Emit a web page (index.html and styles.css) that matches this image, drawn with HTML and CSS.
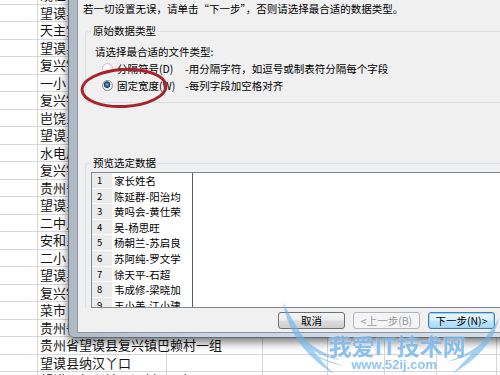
FILE: index.html
```html
<!DOCTYPE html>
<html lang="zh-CN">
<head>
    <meta charset="UTF-8">
    <title>文本分列向导</title>
    <link rel="stylesheet" href="styles.css">
</head>
<body>
    <div class="screen">
        <!-- spreadsheet behind the wizard -->
        <div class="sheet">
            <div class="row"><div class="cell"></div><div class="cell">现任职务</div><div class="cell"></div><div class="cell"></div><div class="cell"></div><div class="cell"></div><div class="cell"></div><div class="cell"></div></div>
            <div class="row"><div class="cell"></div><div class="cell">望谟县</div><div class="cell"></div><div class="cell"></div><div class="cell"></div><div class="cell"></div><div class="cell"></div><div class="cell"></div></div>
            <div class="row"><div class="cell"></div><div class="cell">天主堂</div><div class="cell"></div><div class="cell"></div><div class="cell"></div><div class="cell"></div><div class="cell"></div><div class="cell"></div></div>
            <div class="row"><div class="cell"></div><div class="cell">望谟县</div><div class="cell"></div><div class="cell"></div><div class="cell"></div><div class="cell"></div><div class="cell"></div><div class="cell"></div></div>
            <div class="row"><div class="cell"></div><div class="cell">复兴镇</div><div class="cell"></div><div class="cell"></div><div class="cell"></div><div class="cell"></div><div class="cell"></div><div class="cell"></div></div>
            <div class="row"><div class="cell"></div><div class="cell">一小</div><div class="cell"></div><div class="cell"></div><div class="cell"></div><div class="cell"></div><div class="cell"></div><div class="cell"></div></div>
            <div class="row"><div class="cell"></div><div class="cell">复兴镇</div><div class="cell"></div><div class="cell"></div><div class="cell"></div><div class="cell"></div><div class="cell"></div><div class="cell"></div></div>
            <div class="row"><div class="cell"></div><div class="cell">岜饶乡</div><div class="cell"></div><div class="cell"></div><div class="cell"></div><div class="cell"></div><div class="cell"></div><div class="cell"></div></div>
            <div class="row"><div class="cell"></div><div class="cell">望谟县</div><div class="cell"></div><div class="cell"></div><div class="cell"></div><div class="cell"></div><div class="cell"></div><div class="cell"></div></div>
            <div class="row"><div class="cell"></div><div class="cell">水电局</div><div class="cell"></div><div class="cell"></div><div class="cell"></div><div class="cell"></div><div class="cell"></div><div class="cell"></div></div>
            <div class="row"><div class="cell"></div><div class="cell">复兴镇</div><div class="cell"></div><div class="cell"></div><div class="cell"></div><div class="cell"></div><div class="cell"></div><div class="cell"></div></div>
            <div class="row"><div class="cell"></div><div class="cell">贵州省</div><div class="cell"></div><div class="cell"></div><div class="cell"></div><div class="cell"></div><div class="cell"></div><div class="cell"></div></div>
            <div class="row"><div class="cell"></div><div class="cell">望谟县</div><div class="cell"></div><div class="cell"></div><div class="cell"></div><div class="cell"></div><div class="cell"></div><div class="cell"></div></div>
            <div class="row"><div class="cell"></div><div class="cell">二中月</div><div class="cell"></div><div class="cell"></div><div class="cell"></div><div class="cell"></div><div class="cell"></div><div class="cell"></div></div>
            <div class="row"><div class="cell"></div><div class="cell">安和乡</div><div class="cell"></div><div class="cell"></div><div class="cell"></div><div class="cell"></div><div class="cell"></div><div class="cell"></div></div>
            <div class="row"><div class="cell"></div><div class="cell">二小</div><div class="cell"></div><div class="cell"></div><div class="cell"></div><div class="cell"></div><div class="cell"></div><div class="cell"></div></div>
            <div class="row"><div class="cell"></div><div class="cell">望谟县</div><div class="cell"></div><div class="cell"></div><div class="cell"></div><div class="cell"></div><div class="cell"></div><div class="cell"></div></div>
            <div class="row"><div class="cell"></div><div class="cell">复兴镇</div><div class="cell"></div><div class="cell"></div><div class="cell"></div><div class="cell"></div><div class="cell"></div><div class="cell"></div></div>
            <div class="row"><div class="cell"></div><div class="cell">菜市</div><div class="cell"></div><div class="cell"></div><div class="cell"></div><div class="cell"></div><div class="cell"></div><div class="cell"></div></div>
            <div class="row"><div class="cell"></div><div class="cell">贵州省</div><div class="cell"></div><div class="cell"></div><div class="cell"></div><div class="cell"></div><div class="cell"></div><div class="cell"></div></div>
            <div class="row"><div class="cell"></div><div class="cell">贵州省望谟县复兴镇巴赖村一组</div><div class="cell"></div><div class="cell"></div><div class="cell"></div><div class="cell"></div><div class="cell"></div><div class="cell"></div></div>
            <div class="row"><div class="cell"></div><div class="cell">望谟县纳汉丫口</div><div class="cell"></div><div class="cell"></div><div class="cell"></div><div class="cell"></div><div class="cell"></div><div class="cell"></div></div>
            <div class="row"><div class="cell"></div><div class="cell">望谟县复兴镇平洞村</div><div class="cell">易如</div><div class="cell"></div><div class="cell"></div><div class="cell"></div><div class="cell"></div><div class="cell"></div></div>
        </div>

        <!-- text import wizard -->
        <div class="dialog">
            <div class="client">
                <p class="intro">文本分列向导判定您的数据具有分隔符。<br>若一切设置无误，请单击“下一步”，否则请选择最合适的数据类型。</p>

                <div class="group">
                    <span class="legend">原始数据类型</span>
                    <div class="prompt">请选择最合适的文件类型:</div>
                    <div class="option">
                        <span class="radio"></span>
                        <span class="opt-name">分隔符号(D)</span>
                        <span class="opt-desc">-用分隔字符，如逗号或制表符分隔每个字段</span>
                    </div>
                    <div class="option">
                        <span class="radio checked"></span>
                        <span class="opt-name">固定宽度(W)</span>
                        <span class="opt-desc">-每列字段加空格对齐</span>
                    </div>
                </div>

                <div class="group group-preview">
                    <span class="legend">预览选定数据</span>
                    <div class="preview">
                        <div class="preview-list">
                            <div class="prow"><span class="pnum">1</span><span class="pname">家长姓名</span></div>
                            <div class="prow"><span class="pnum">2</span><span class="pname">陈延群-阳治均</span></div>
                            <div class="prow"><span class="pnum">3</span><span class="pname">黄吗会-黄仕荣</span></div>
                            <div class="prow"><span class="pnum">4</span><span class="pname">吴-杨思旺</span></div>
                            <div class="prow"><span class="pnum">5</span><span class="pname">杨朝兰-苏启良</span></div>
                            <div class="prow"><span class="pnum">6</span><span class="pname">苏阿纯-罗文学</span></div>
                            <div class="prow"><span class="pnum">7</span><span class="pname">徐天平-石超</span></div>
                            <div class="prow"><span class="pnum">8</span><span class="pname">韦成修-梁晓加</span></div>
                            <div class="prow"><span class="pnum">9</span><span class="pname">王小美-江小建</span></div>
                        </div>
                    </div>
                </div>

                <div class="buttons">
                    <button class="btn">取消</button>
                    <button class="btn btn-disabled">&lt;上一步(B)</button>
                    <button class="btn btn-default">下一步(N)&gt;</button>
                </div>
            </div>
        </div>

        <!-- red marker drawn over the screenshot -->
        <svg class="marker" width="94" height="46" viewBox="0 0 94 46">
            <ellipse cx="45" cy="23" rx="42" ry="18.5" fill="none" stroke="#a8232b" stroke-width="3" transform="rotate(-3 45 23)"/>
        </svg>

        <!-- site watermark -->
        <div class="watermark">
            <svg class="wings" width="222" height="79" viewBox="0 0 222 79">
                <g fill="#6ab2ea" opacity="0.6">
                    <path d="M3 6 C8 38 28 62 54 78 C36 60 18 36 3 6 Z"/>
                    <path d="M10 28 C20 48 36 60 60 64 C40 56 24 46 10 28 Z"/>
                    <path d="M24 50 C32 60 44 66 64 70 C46 64 34 60 24 50 Z"/>
                </g>
                <g fill="#6ab2ea" opacity="0.6" transform="translate(222 0) scale(-1 1)">
                    <path d="M3 22 C8 46 26 64 50 78 C34 62 16 44 3 22 Z"/>
                    <path d="M10 38 C20 54 34 62 56 66 C38 60 24 52 10 38 Z"/>
                </g>
            </svg>
            <div class="wm-title">我爱IT技术网</div>
            <div class="wm-url">www.52ij.com</div>
        </div>
    </div>
</body>
</html>
```

FILE: styles.css
```css
body {
    margin: 0;
    background: #fff;
    font-family: "Noto Sans CJK SC", "Liberation Sans", sans-serif;
}

.screen {
    position: relative;
    width: 500px;
    height: 375px;
    overflow: hidden;
}

/* spreadsheet */
.sheet {
    margin-top: -13px;
}

.row {
    display: grid;
    grid-template-columns: 38px 129px 96px 65px 57px 52px 60px 40px;
    height: 17.5px;
}

.cell {
    box-sizing: border-box;
    border-right: 1px solid #d6d6d6;
    border-bottom: 1px solid #d6d6d6;
    padding-left: 2px;
    font-size: 13px;
    line-height: 16px;
    color: #151515;
    white-space: nowrap;
}

/* dialog window */
.dialog {
    position: absolute;
    left: 68px;
    top: -36px;
    width: 450px;
    border: 1px solid #5d6b79;
    border-radius: 0 0 6px 6px;
    padding: 8px 8px 4px;
    background: linear-gradient(90deg, #aeb9c4, #c9d5e1 30%, #d3dde8);
    box-shadow: 0 4px 10px rgba(0, 0, 0, 0.55);
}

.client {
    background: #f0f0f0;
    border: 1px solid #8a98a6;
    padding-top: 14px;
    font-size: 10.5px;
    line-height: 14px;
    color: #000;
}

.intro {
    margin: 0;
    padding-left: 5px;
    white-space: nowrap;
}

.group {
    margin: 15px 8px 0 7px;
    border: 1px solid #d5dfe5;
    border-radius: 3px;
    padding-bottom: 8px;
}

.group-preview {
    margin-top: 60px;
    border-bottom: none;
    border-radius: 3px 3px 0 0;
    padding-bottom: 0;
}

.legend {
    display: block;
    width: fit-content;
    margin: -8px 0 0 5px;
    padding: 0 2px;
    background: #f0f0f0;
}

.prompt {
    margin: 7px 0 1px 9px;
}

.option {
    display: flex;
    align-items: center;
    height: 17px;
    padding-left: 16px;
    white-space: nowrap;
}

.radio {
    box-sizing: border-box;
    width: 11px;
    height: 11px;
    margin-right: 4px;
    border: 1px solid #c4c7ca;
    border-radius: 50%;
    background: radial-gradient(circle at 40% 35%, #ffffff, #e6e6e6);
}

.radio.checked {
    border-color: #8a9096;
    background: radial-gradient(circle at 45% 40%, #8fb4d8 0, #2c5a86 2px, #1d3d5e 3px, #e8ecef 3.6px, #dfe3e6);
}

.opt-name {
    width: 68px;
}

/* preview box */
.preview {
    display: flex;
    height: 134px;
    margin: 2px 5px 0 5px;
    border: 1px solid #828790;
    background: #fff;
    overflow: hidden;
}

.preview-list {
    width: 100px;
    border-right: 1px solid #5a5a5a;
}

.prow {
    display: flex;
    height: 15.6px;
    line-height: 15.6px;
    white-space: nowrap;
}

.pnum {
    box-sizing: border-box;
    width: 20px;
    padding-left: 5px;
    background: #ebebeb;
    border-bottom: 1px solid #fff;
    font-size: 9.5px;
}

.pname {
    padding-left: 2px;
}

/* buttons */
.buttons {
    display: flex;
    justify-content: flex-end;
    gap: 8px;
    padding: 4px 31px 3px 0;
}

.btn {
    box-sizing: border-box;
    width: 67px;
    height: 17px;
    padding: 0;
    border: 1px solid #707070;
    border-radius: 3px;
    background: linear-gradient(#f4f4f4 0, #ececec 48%, #dcdcdc 52%, #cfcfcf 100%);
    font: inherit;
    font-size: 10.5px;
    line-height: 15px;
    color: #000;
}

.btn-disabled {
    border-color: #b2b6b9;
    background: #f4f4f4;
    color: #9a9a9a;
}

.btn-default {
    border-color: #3c7fb1;
    background: linear-gradient(#eaf6fd 0, #d9f0fc 48%, #bee6fd 52%, #a7d9f5 100%);
    box-shadow: inset 0 0 0 1px #9ed2f0;
}

/* overlays */
.marker {
    position: absolute;
    left: 79px;
    top: 65px;
}

.watermark {
    position: absolute;
    left: 280px;
    top: 296px;
    width: 222px;
    height: 79px;
    text-align: center;
}

.wings {
    position: absolute;
    left: 0;
    top: 0;
}

.wm-title {
    position: relative;
    padding-top: 36px;
    padding-left: 12px;
    font-size: 23px;
    font-weight: bold;
    line-height: 26px;
    color: rgba(88, 166, 232, 0.7);
    text-shadow: 0 0 2px rgba(255, 255, 255, 0.8);
}

.wm-url {
    position: relative;
    padding-left: 6px;
    font-family: "Liberation Sans", sans-serif;
    font-size: 13px;
    font-weight: bold;
    line-height: 14px;
    color: rgba(96, 172, 234, 0.7);
}
```
